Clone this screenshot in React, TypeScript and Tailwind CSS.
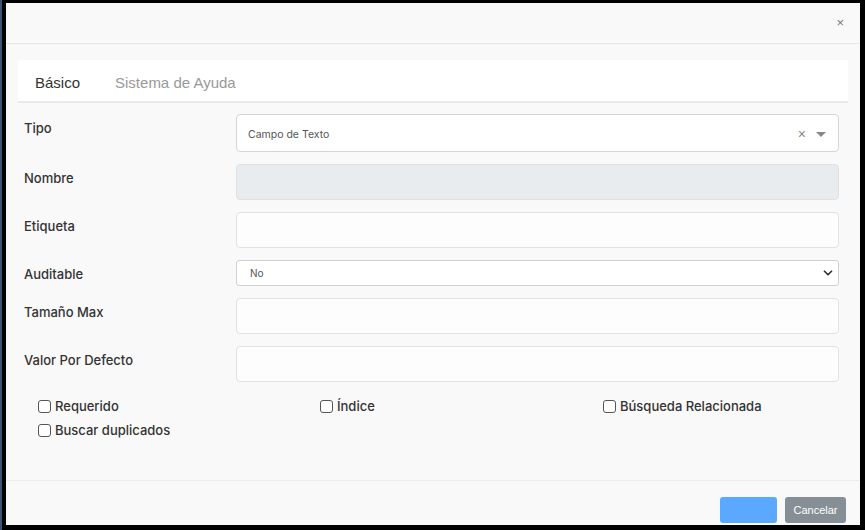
import { ChevronDown } from "lucide-react";

const label = "text-[13px] leading-5 font-medium text-[#333] pt-[4px]";
const font = { fontFamily: "Inter, 'Noto Sans', sans-serif" };

function Row({ title, children }: { title: string; children: React.ReactNode }) {
  return (
    <div className="flex">
      <div className={`w-[212px] shrink-0 ${label}`}>{title}</div>
      <div className="flex-1">{children}</div>
    </div>
  );
}

function Check({ text }: { text: string }) {
  return (
    <label className="flex items-center gap-[4px] text-[13px] font-medium text-[#333]">
      <span className="h-[13px] w-[13px] rounded-[3px] border border-[#555] bg-white" />
      {text}
    </label>
  );
}

export default function App() {
  return (
    <div className="h-[530px] w-[865px] bg-black pt-[3px] pb-[5px] pl-[6px] pr-[5px] relative" style={font}>
      <div className="absolute left-0 top-0 h-full w-[2px] bg-[#3b5573]" />
      <div className="flex h-full flex-col bg-[#f9f9f9]">
        <div className="flex h-[41px] items-center justify-end border-b border-[#e6e6e6] pr-[16px]">
          <span className="text-[13px] text-[#777]" style={{ fontFamily: "'Liberation Sans', sans-serif" }}>×</span>
        </div>
        <div className="px-[12px] pt-[16px]">
          <div
            className="flex h-[43px] items-center gap-[35px] border-b-2 border-[#eaeaea] bg-white px-[17px] pt-[5px] text-[15px]"
            style={{ fontFamily: "'Liberation Sans', sans-serif" }}
          >
            <span className="text-[#333]">Básico</span>
            <span className="text-[#999]">Sistema de Ayuda</span>
          </div>
        </div>
        <div className="flex flex-col gap-[12px] pl-[18px] pr-[21px] pt-[11px]">
          <Row title="Tipo">
            <div className="flex h-[38px] items-center rounded-[4px] border border-[#d5d5d5] bg-white pl-[11px] pr-[12px] pt-[3px] text-[10.5px] text-[#555]">
              <span className="flex-1">Campo de Texto</span>
              <span className="mr-[10px] text-[14px] text-[#888]" style={{ fontFamily: "'Liberation Sans', sans-serif" }}>×</span>
              <span className="h-0 w-0 border-x-[5px] border-t-[5px] border-x-transparent border-t-[#888]" />
            </div>
          </Row>
          <Row title="Nombre">
            <div className="h-[36px] rounded-[4px] border border-[#dfe2e5] bg-[#e9ecef]" />
          </Row>
          <Row title="Etiqueta">
            <div className="h-[36px] rounded-[4px] border border-[#e2e2e2] bg-[#fdfdfd]" />
          </Row>
          <Row title="Auditable">
            <div className="flex h-[26px] items-center rounded-[3px] border border-[#d0d0d0] bg-white pl-[13px] pr-[3px] text-[10px] text-[#555]">
              <span className="flex-1">No</span>
              <ChevronDown className="h-[14px] w-[14px] text-[#333]" strokeWidth={3} />
            </div>
          </Row>
          <Row title="Tamaño Max">
            <div className="h-[36px] rounded-[4px] border border-[#e2e2e2] bg-[#fdfdfd]" />
          </Row>
          <Row title="Valor Por Defecto">
            <div className="h-[36px] rounded-[4px] border border-[#e2e2e2] bg-[#fdfdfd]" />
          </Row>
        </div>
        <div className="grid grid-cols-[282px_283px_1fr] gap-y-[4px] pl-[32px] pt-[15px]">
          <Check text="Requerido" />
          <Check text="Índice" />
          <Check text="Búsqueda Relacionada" />
          <Check text="Buscar duplicados" />
        </div>
        <div className="mt-auto flex h-[45px] items-start justify-end gap-[8px] border-t border-[#ececec] pr-[14px] pt-[16px]">
          <button className="h-[26px] w-[57px] rounded-[3px] bg-[#5aa9ff]" />
          <button
            className="h-[26px] w-[61px] rounded-[3px] bg-[#868e96] text-[11px] text-white"
            style={{ fontFamily: "'Liberation Sans', sans-serif" }}
          >
            Cancelar
          </button>
        </div>
      </div>
    </div>
  );
}
